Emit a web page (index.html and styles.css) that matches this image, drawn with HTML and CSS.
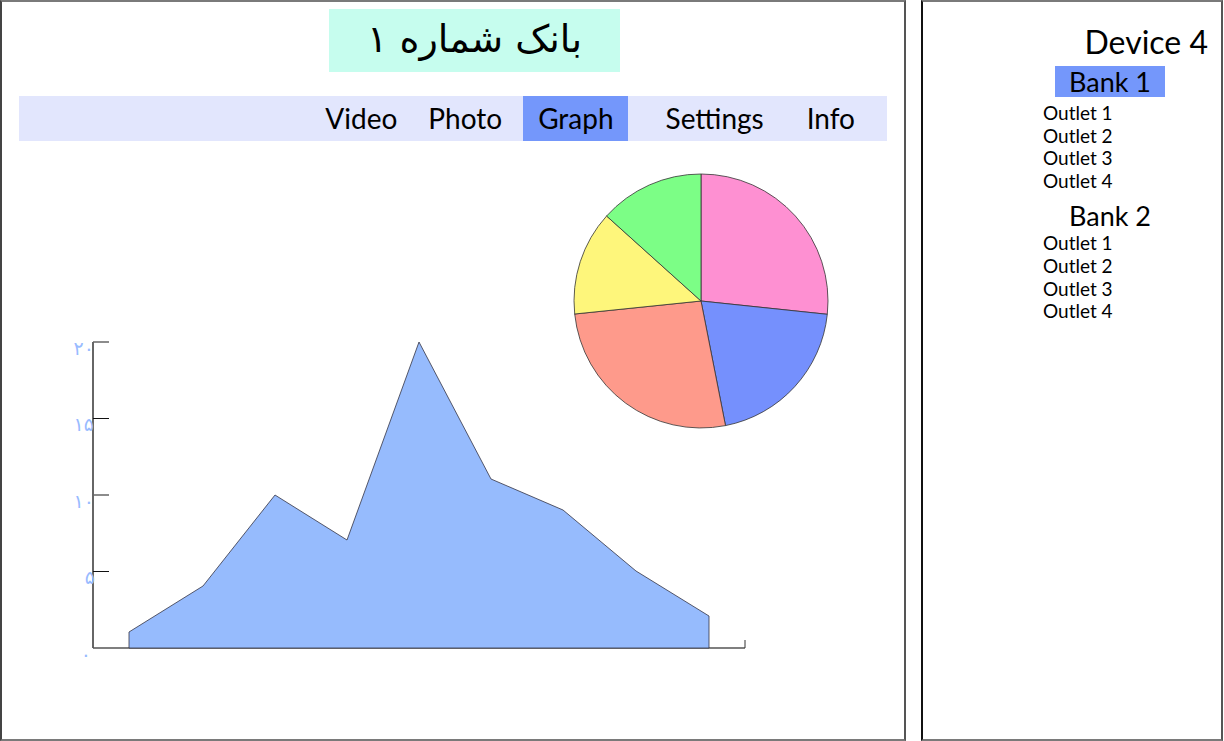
FILE: index.html
```html
<!DOCTYPE html>
<html lang="en">
<head>
<meta charset="utf-8">
<title>Bank 1 - Graph</title>
<link rel="stylesheet" href="styles.css">
</head>
<body>
<main class="main-panel">
  <h1 class="bank-title" dir="rtl" lang="fa">بانک شماره ۱</h1>
  <nav class="tabs">
    <a class="tab tab-video">Video</a>
    <a class="tab tab-photo">Photo</a>
    <a class="tab tab-graph active">Graph</a>
    <a class="tab tab-settings">Settings</a>
    <a class="tab tab-info">Info</a>
  </nav>
  <div class="chart-area">
    <svg class="charts" width="902" height="598" viewBox="2 141 902 598" xmlns="http://www.w3.org/2000/svg">
      <g class="pie" stroke="#333" stroke-width="0.8">
        <path d="M701 301 L701 174 A127 127 0 0 1 827.3 314.3 Z" fill="#fe90d2"/>
        <path d="M701 301 L827.3 314.3 A127 127 0 0 1 725.5 425.6 Z" fill="#7590fd"/>
        <path d="M701 301 L725.5 425.6 A127 127 0 0 1 574.7 314 Z" fill="#fe9a8b"/>
        <path d="M701 301 L574.7 314 A127 127 0 0 1 606.6 216 Z" fill="#fef67b"/>
        <path d="M701 301 L606.6 216 A127 127 0 0 1 701 174 Z" fill="#7cfe86"/>
      </g>
      <g class="axes" fill="none">
        <line x1="93" y1="342" x2="93" y2="648" stroke="#666" stroke-width="2"/>
        <line x1="93" y1="648" x2="745" y2="648" stroke="#555" stroke-width="1.5"/>
        <line x1="745" y1="640" x2="745" y2="648" stroke="#333" stroke-width="1"/>
        <line x1="93" y1="342" x2="109" y2="342" stroke="#666" stroke-width="1.5"/>
        <line x1="93" y1="418.5" x2="109" y2="418.5" stroke="#111" stroke-width="1"/>
        <line x1="93" y1="495" x2="109" y2="495" stroke="#666" stroke-width="1.5"/>
        <line x1="93" y1="571.5" x2="109" y2="571.5" stroke="#111" stroke-width="1"/>
      </g>
      <polygon class="area" points="129,648 129,632 203,586 275,495 347,540 419,342 491,479 563,510 636,571 709,616 709,648" fill="#96bbfd" stroke="#334" stroke-width="0.8"/>
      <g class="y-labels" fill="#99bbff" font-family="DejaVu Sans, sans-serif" font-size="19" text-anchor="end">
        <text x="94" y="355">۲۰</text>
        <text x="94" y="431">۱۵</text>
        <text x="94" y="508">۱۰</text>
        <text x="95" y="584">۵</text>
        <text x="91" y="661">۰</text>
      </g>
    </svg>
  </div>
</main>
<aside class="side-panel">
  <h2 class="device-name">Device 4</h2>
  <div class="banks">
    <section class="bank">
      <h3 class="bank-name active">Bank 1</h3>
      <ul class="outlets">
        <li>Outlet 1</li>
        <li>Outlet 2</li>
        <li>Outlet 3</li>
        <li>Outlet 4</li>
      </ul>
    </section>
    <section class="bank">
      <h3 class="bank-name">Bank 2</h3>
      <ul class="outlets">
        <li>Outlet 1</li>
        <li>Outlet 2</li>
        <li>Outlet 3</li>
        <li>Outlet 4</li>
      </ul>
    </section>
  </div>
</aside>
</body>
</html>
```
FILE: styles.css
```css
* { box-sizing: border-box; }
html, body { margin: 0; padding: 0; background: #fff; }
body {
  display: flex;
  width: 1224px;
  height: 741px;
  font-family: "Lato", "Open Sans", sans-serif;
  color: #000;
  overflow: hidden;
}
.main-panel {
  width: 906px;
  height: 741px;
  border-left: 2px solid #444;
  border-top: 2px solid #7a7a7a;
  border-right: 2px solid #555;
  border-bottom: 2px solid #7a7a7a;
  display: flex;
  flex-direction: column;
  align-items: flex-start;
  padding-top: 7px;
}
.bank-title {
  margin: 0 0 0 327px;
  width: 291px;
  height: 63px;
  background: #c6fdee;
  font-family: "DejaVu Sans", sans-serif;
  font-weight: normal;
  font-size: 38px;
  line-height: 60px;
  text-align: center;
}
.tabs {
  margin: 24px 0 0 17px;
  width: 868px;
  height: 45px;
  background: #e2e6fd;
  display: flex;
  justify-content: flex-end;
  align-items: stretch;
  padding-right: 19px;
}
.tab {
  font-size: 28px;
  line-height: 45px;
  padding: 0 13px;
  color: #000;
}
.tab-video { margin-right: 5px; }
.tab-photo { margin-right: 8px; }
.tab-graph { margin-right: 25px; padding: 0 14px 0 15px; }
.tab-settings { margin-right: 17px; }
.tab.active { background: #7497fb; }
.chart-area {
  width: 902px;
  height: 598px;
}
.charts { display: block; }

.side-panel {
  margin-left: 15px;
  width: 302px;
  height: 741px;
  border-left: 2px solid #111;
  border-top: 2px solid #7a7a7a;
  border-right: 2px solid #555;
  border-bottom: 2px solid #7a7a7a;
  display: flex;
  flex-direction: column;
}
.device-name {
  margin: 20px 0 0;
  padding-right: 13px;
  text-align: right;
  font-size: 32px;
  font-weight: normal;
  line-height: 40px;
}
.banks {
  margin-left: 120px;
  display: flex;
  flex-direction: column;
}
.bank-name {
  margin: 0 0 0 12px;
  width: 110px;
  height: 31px;
  font-size: 27px;
  font-weight: normal;
  line-height: 31px;
  text-align: center;
}
.bank-name.active { background: #7497fb; }
.bank:first-child .bank-name { margin-top: 4px; }
.bank + .bank .bank-name { margin-top: 8px; }
.outlets {
  list-style: none;
  margin: 5px 0 0;
  padding: 0;
  font-size: 19px;
  line-height: 22.6px;
}
.bank + .bank .outlets { margin-top: 1px; }
```
